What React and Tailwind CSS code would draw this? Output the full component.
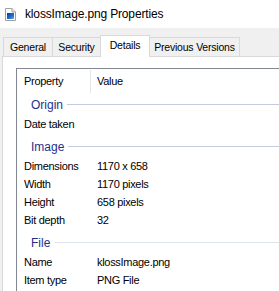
import React from "react";

const font = { fontFamily: '"Liberation Sans", Arial, sans-serif' };

function FileIcon() {
  return (
    <svg width="11" height="13" viewBox="0 0 11 13" className="shrink-0">
      <path d="M0.5 0.5 H7 L10.5 4 V12.5 H0.5 Z" fill="#ffffff" stroke="#a0a0a0" />
      <path d="M7 0.5 V4 H10.5" fill="#e8e8e8" stroke="#a0a0a0" />
      <defs>
        <linearGradient id="g" x1="0" y1="0" x2="1" y2="1">
          <stop offset="0" stopColor="#0b3d91" />
          <stop offset="0.6" stopColor="#1f6fd1" />
          <stop offset="1" stopColor="#5fb0f0" />
        </linearGradient>
      </defs>
      <rect x="2" y="5" width="7" height="6" fill="url(#g)" />
    </svg>
  );
}

function Group({ label, first, lineClass }) {
  return (
    <div className={`flex h-[21px] items-center pl-[14px] ${first ? "" : "mt-[3px]"}`}>
      <span className="text-[12px] leading-none text-[#1e3287]">{label}</span>
      <div className={`ml-[4px] h-px flex-1 ${lineClass}`} />
    </div>
  );
}

function Row({ name, value }) {
  return (
    <div className="flex h-[18px] items-center text-[11px] tracking-[-0.3px] text-black leading-none">
      <div className="w-[80px] shrink-0 pl-[7px]">{name}</div>
      <div>{value}</div>
    </div>
  );
}

export default function App() {
  return (
    <div className="flex h-[291px] w-[279px] flex-col overflow-hidden bg-[#f0f0f0]" style={font}>
      <div className="flex h-[28px] shrink-0 items-center bg-white pl-[5px]">
        <FileIcon />
        <span className="ml-[9px] text-[12px] tracking-[-0.15px] text-black leading-none">
          klossImage.png Properties
        </span>
      </div>
      <div className="flex h-[28px] shrink-0 items-end pl-[3px] text-[10.5px] tracking-[-0.2px] text-black leading-none">
        <div className="flex h-[19px] w-[49px] items-center justify-center border-l border-t border-[#d9d9d9]">
          General
        </div>
        <div className="flex h-[19px] w-[48px] items-center justify-center border-l border-t border-[#d9d9d9]">
          Security
        </div>
        <div className="relative z-10 -mb-px flex h-[22px] w-[50px] items-center justify-center border-l border-r border-t border-[#d9d9d9] bg-white pb-[2px]">
          Details
        </div>
        <div className="flex h-[19px] w-[90px] items-center justify-center border-r border-t border-[#d9d9d9]">
          Previous Versions
        </div>
      </div>
      <div className="ml-[2px] flex flex-1 flex-col border-l border-t border-[#d9d9d9] bg-white pl-[13px] pt-[11px]">
        <div className="flex flex-1 flex-col border-l border-t border-[#828790]">
          <div className="flex h-[25px] items-center text-[11px] tracking-[-0.3px] text-black leading-none">
            <div className="w-[73px] shrink-0 pl-[7px]">Property</div>
            <div className="h-[23px] w-px bg-[#e5e5e5]" />
            <div className="pl-[6px]">Value</div>
          </div>
          <Group label="Origin" first lineClass="bg-[#c2cbe0]" />
          <Row name="Date taken" value="" />
          <Group label="Image" lineClass="bg-[#c2cbe0]" />
          <Row name="Dimensions" value="1170 x 658" />
          <Row name="Width" value="1170 pixels" />
          <Row name="Height" value="658 pixels" />
          <Row name="Bit depth" value="32" />
          <Group label="File" lineClass="bg-[#dfe3eb]" />
          <Row name="Name" value="klossImage.png" />
          <Row name="Item type" value="PNG File" />
        </div>
      </div>
    </div>
  );
}
